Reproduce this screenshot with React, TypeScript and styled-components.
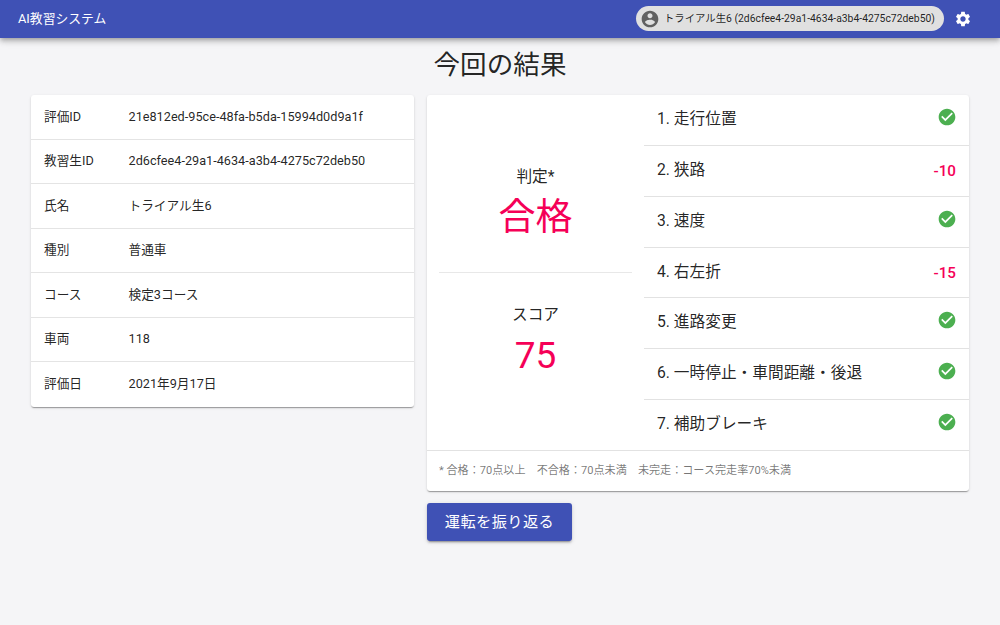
import React from "react";
import styled, { createGlobalStyle } from "styled-components";

const Global = createGlobalStyle`
  html, body { margin: 0; padding: 0; background: #f5f5f7; }
  body { font-family: Roboto, "Noto Sans CJK JP", sans-serif; color: rgba(0,0,0,0.87); }
  * { box-sizing: border-box; }
`;

const Page = styled.div`
  width: 1000px;
  height: 625px;
  overflow: hidden;
  display: flex;
  flex-direction: column;
`;
const AppBar = styled.header`
  height: 37.5px;
  flex: none;
  background: #3f51b5;
  display: flex;
  align-items: center;
  padding: 0 28.5px 0 18px;
  box-shadow: 0 2px 4px -1px rgba(0,0,0,.2), 0 4px 5px 0 rgba(0,0,0,.14), 0 1px 10px 0 rgba(0,0,0,.12);
  position: relative;
  z-index: 2;
`;
const AppTitle = styled.div`
  color: #fff;
  font-size: 12.8px;
  line-height: 16px;
  flex: 1;
`;
const UserChip = styled.div`
  height: 25px;
  width: 308px;
  border-radius: 13px;
  background: #e0e0e0;
  display: flex;
  align-items: center;
  padding: 0 8px 0 4px;
  gap: 4px;
  font-size: 10.36px;
  line-height: 14px;
  color: rgba(0,0,0,0.87);
  white-space: nowrap;
  margin-right: 9.5px;
`;
const GearButton = styled.div`
  width: 18px;
  height: 18px;
  display: flex;
`;
const Heading = styled.h1`
  margin: 0;
  height: 57.5px;
  line-height: 54px;
  text-align: center;
  font-size: 26.6px;
  font-weight: 400;
  flex: none;
`;
const Columns = styled.main`
  display: flex;
  align-items: flex-start;
  gap: 13px;
  padding: 0 31px;
`;
const Card = styled.section`
  background: #fff;
  border-radius: 3px;
  box-shadow: 0 2px 1px -1px rgba(0,0,0,.2), 0 1px 1px 0 rgba(0,0,0,.14), 0 1px 3px 0 rgba(0,0,0,.12);
`;
const InfoCard = styled(Card)`
  width: 383px;
  flex: none;
`;
const InfoRow = styled.div`
  display: flex;
  align-items: center;
  height: 44.5px;
  padding: 0 13px;
  font-size: 12.7px;
  line-height: 18px;
  border-bottom: 1px solid #e4e4e4;
  &:last-child { border-bottom: 0; }
`;
const InfoLabel = styled.div`
  width: 84.5px;
  flex: none;
`;
const ResultColumn = styled.div`
  width: 542px;
  flex: none;
  display: flex;
  flex-direction: column;
  align-items: flex-start;
  gap: 12px;
`;
const ResultCard = styled(Card)`
  width: 100%;
`;
const ResultBody = styled.div`
  display: flex;
  height: 355px;
`;
const Summary = styled.div`
  width: 217px;
  flex: none;
  padding: 0 12px;
  display: flex;
  flex-direction: column;
`;
const SummaryBlock = styled.div<{ $first?: boolean }>`
  height: ${(p) => (p.$first ? "178px" : "177px")};
  display: flex;
  flex-direction: column;
  align-items: center;
  justify-content: ${(p) => (p.$first ? "flex-end" : "flex-start")};
  padding: ${(p) => (p.$first ? "0 0 29px" : "32px 0 0")};
  border-bottom: ${(p) => (p.$first ? "1px solid #e8e8e8" : "0")};
`;
const SummaryLabel = styled.div`
  font-size: 15.7px;
  line-height: 20px;
`;
const SummaryValue = styled.div`
  font-size: 37px;
  line-height: 50px;
  color: #f50057;
  margin-top: 6px;
`;
const ItemList = styled.ul`
  flex: 1;
  margin: 0;
  padding: 0;
  list-style: none;
  display: flex;
  flex-direction: column;
`;
const Item = styled.li`
  flex: 1;
  display: flex;
  align-items: center;
  justify-content: space-between;
  padding: 0 13px 2px;
  font-size: 15.7px;
  line-height: 20px;
  border-bottom: 1px solid #e2e2e2;
  &:last-child { border-bottom: 0; }
`;
const Penalty = styled.span`
  color: #f50057;
  font-size: 15.2px;
  font-weight: 500;
  margin-top: 2px;
`;
const CheckWrap = styled.span`
  display: flex;
  width: 20px;
  height: 20px;
  margin-right: -1px;
  margin-top: -4px;
`;
const Note = styled.div`
  height: 41px;
  border-top: 1px solid #e2e2e2;
  padding: 0 12px;
  display: flex;
  align-items: center;
  font-size: 11.1px;
  line-height: 14px;
  color: rgba(0,0,0,0.54);
  white-space: pre;
`;
const ReviewButton = styled.button`
  width: 145px;
  height: 38px;
  border: 0;
  border-radius: 3px;
  background: #3f51b5;
  color: #fff;
  font-family: inherit;
  font-size: 15.2px;
  letter-spacing: 0.45px;
  line-height: 20px;
  box-shadow: 0 3px 1px -2px rgba(0,0,0,.2), 0 2px 2px 0 rgba(0,0,0,.14), 0 1px 5px 0 rgba(0,0,0,.12);
`;

const Icon = ({ d, size, color }: { d: string; size: number; color: string }) => (
  <svg width={size} height={size} viewBox="0 0 24 24" fill={color}><path d={d} /></svg>
);

const ACCOUNT = "M12 2C6.48 2 2 6.48 2 12s4.48 10 10 10 10-4.48 10-10S17.52 2 12 2zm0 3c1.66 0 3 1.34 3 3s-1.34 3-3 3-3-1.34-3-3 1.34-3 3-3zm0 14.2c-2.5 0-4.71-1.28-6-3.22.03-1.99 4-3.08 6-3.08 1.99 0 5.97 1.09 6 3.08-1.29 1.94-3.5 3.22-6 3.22z";
const GEAR = "M19.14 12.94c.04-.3.06-.61.06-.94 0-.32-.02-.64-.07-.94l2.03-1.58c.18-.14.23-.41.12-.61l-1.92-3.32c-.12-.22-.37-.29-.59-.22l-2.39.96c-.5-.38-1.03-.7-1.62-.94l-.36-2.54c-.04-.24-.24-.41-.48-.41h-3.84c-.24 0-.43.17-.47.41l-.36 2.54c-.59.24-1.13.57-1.62.94l-2.39-.96c-.22-.08-.47 0-.59.22L2.74 8.87c-.12.21-.08.47.12.61l2.03 1.58c-.05.3-.09.63-.09.94s.02.64.07.94l-2.03 1.58c-.18.14-.23.41-.12.61l1.92 3.32c.12.22.37.29.59.22l2.39-.96c.5.38 1.03.7 1.62.94l.36 2.54c.05.24.24.41.48.41h3.84c.24 0 .44-.17.47-.41l.36-2.54c.59-.24 1.13-.56 1.62-.94l2.39.96c.22.08.47 0 .59-.22l1.92-3.32c.12-.22.07-.47-.12-.61l-2.01-1.58zM12 15.6c-1.98 0-3.6-1.62-3.6-3.6s1.62-3.6 3.6-3.6 3.6 1.62 3.6 3.6-1.62 3.6-3.6 3.6z";
const CHECK = "M12 2C6.48 2 2 6.48 2 12s4.48 10 10 10 10-4.48 10-10S17.52 2 12 2zm-2 15l-5-5 1.41-1.41L10 14.17l7.59-7.59L19 8l-9 9z";

const info = [
  ["評価ID", "21e812ed-95ce-48fa-b5da-15994d0d9a1f"],
  ["教習生ID", "2d6cfee4-29a1-4634-a3b4-4275c72deb50"],
  ["氏名", "トライアル生6"],
  ["種別", "普通車"],
  ["コース", "検定3コース"],
  ["車両", "118"],
  ["評価日", "2021年9月17日"],
];
const items: [string, string | null][] = [
  ["1. 走行位置", null],
  ["2. 狭路", "-10"],
  ["3. 速度", null],
  ["4. 右左折", "-15"],
  ["5. 進路変更", null],
  ["6. 一時停止・車間距離・後退", null],
  ["7. 補助ブレーキ", null],
];

export default function App() {
  return (
    <Page>
      <Global />
      <AppBar>
        <AppTitle>AI教習システム</AppTitle>
        <UserChip>
          <Icon d={ACCOUNT} size={20} color="#616161" />
          トライアル生6 (2d6cfee4-29a1-4634-a3b4-4275c72deb50)
        </UserChip>
        <GearButton><Icon d={GEAR} size={18} color="#fff" /></GearButton>
      </AppBar>
      <Heading>今回の結果</Heading>
      <Columns>
        <InfoCard>
          {info.map(([k, v]) => (
            <InfoRow key={k}><InfoLabel>{k}</InfoLabel><div>{v}</div></InfoRow>
          ))}
        </InfoCard>
        <ResultColumn>
          <ResultCard>
            <ResultBody>
              <Summary>
                <SummaryBlock $first>
                  <SummaryLabel>判定*</SummaryLabel>
                  <SummaryValue>合格</SummaryValue>
                </SummaryBlock>
                <SummaryBlock>
                  <SummaryLabel>スコア</SummaryLabel>
                  <SummaryValue>75</SummaryValue>
                </SummaryBlock>
              </Summary>
              <ItemList>
                {items.map(([label, penalty]) => (
                  <Item key={label}>
                    <span>{label}</span>
                    {penalty ? <Penalty>{penalty}</Penalty> : <CheckWrap><Icon d={CHECK} size={20} color="#4caf50" /></CheckWrap>}
                  </Item>
                ))}
              </ItemList>
            </ResultBody>
            <Note>{"* 合格：70点以上　不合格：70点未満　未完走：コース完走率70%未満"}</Note>
          </ResultCard>
          <ReviewButton>運転を振り返る</ReviewButton>
        </ResultColumn>
      </Columns>
    </Page>
  );
}
